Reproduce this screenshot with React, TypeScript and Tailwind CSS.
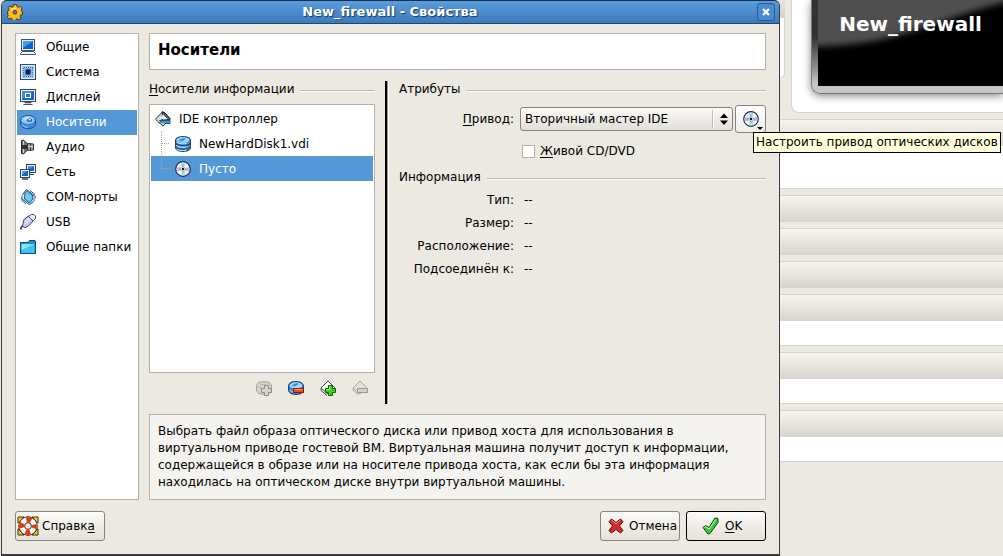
import React, { useState } from "react";

type IconProps = {
  children: React.ReactNode;
  size?: number;
};

const Icon: React.FC<IconProps> = ({ children, size = 16 }) => (
  <svg
    width={size}
    height={size}
    viewBox="0 0 16 16"
    fill="none"
    className="shrink-0"
    aria-hidden="true"
  >
    {children}
  </svg>
);

const GeneralIcon = () => (
  <Icon>
    <rect x="1.5" y="0.5" width="13" height="11" fill="#e9eef4" stroke="#4a5260" />
    <rect x="3" y="2" width="10" height="8" fill="#0a62d0" />
    <path d="M3 2h10L3 9z" fill="#3d9bf2" />
    <path d="M2.5 12.5h11l2 2v1H.5v-1z" fill="#f2f4f6" stroke="#4a505c" />
  </Icon>
);

const SystemIcon = () => (
  <Icon>
    <rect x="0.5" y="0.5" width="15" height="15" fill="#9fcbf7" stroke="#3c4a60" />
    <rect x="1.5" y="1.5" width="13" height="13" stroke="#dcebfc" />
    <path
      d="M4 3.500h9M4 12.500h9M3.500 4v9M12.500 4v9"
      stroke="#2f6fc0"
      strokeDasharray="1 1"
    />
    <rect x="4.500" y="4.500" width="7" height="7" fill="#5f9be0" />
    <rect x="5.500" y="5.500" width="5" height="5" fill="#0f1c3c" />
    <path d="M5 6l1 0M10 5h1M5 10h1M10 10h1" stroke="#8fc0f2" />
  </Icon>
);

const DisplayIcon = () => (
  <Icon>
    <rect x="0.5" y="0.5" width="15" height="12" fill="#eef2f6" stroke="#3f4756" />
    <rect x="2" y="2" width="12" height="9" fill="#1566d0" />
    <path d="M2 2h12L2 10z" fill="#3a8fe8" />
    <rect x="5.5" y="4.5" width="5" height="4" fill="#2473d6" stroke="#fff" />
    <path d="M5 13h6v2H5z" fill="#c9ced6" />
    <path d="M3.5 15.500h9M4.500 13.500h7" stroke="#4a505c" />
  </Icon>
);

const StorageIcon = () => (
  <Icon>
    <path
      d="M.6 6.5C.6 3.500 4 1.600 8.200 1.600s7.300 2 7.300 4.600v4c0 2.800-3.300 4.400-7.300 4.400S.6 12.600.6 9.800z"
      fill="#3c8bd8"
      stroke="#1d4f88"
    />
    <ellipse cx="8" cy="6" rx="6.600" ry="3.900" fill="#8fccf8" />
    <path d="M2.500 5l5-2.500 3 .5-5 3z" fill="#c4e5fc" />
    <ellipse cx="9.500" cy="6.200" rx="2.800" ry="1.700" fill="#1f5fa6" />
    <ellipse cx="9.500" cy="5.700" rx="1.500" ry="0.800" fill="#e6f5fe" />
    <path d="M2 10.500c1 2 3 2.700 6 2.700" stroke="#a4d5f7" />
  </Icon>
);

const AudioIcon = () => (
  <Icon>
    <path d="M1.500 1.500L3.500 1l4 4v6l-4 4-2-.5z" fill="#777" stroke="#222" />
    <path d="M3.500 2v12" stroke="#ccc" />
    <rect x="1" y="6" width="6" height="4" fill="#333" />
    <path d="M7.500 4.500l6 .5v6l-6 .5z" fill="#a5a5a5" stroke="#333" />
    <path d="M10.500 4v8" stroke="#444" />
    <path d="M8 7.500h5" stroke="#ddd" />
  </Icon>
);

const NetworkIcon = () => (
  <Icon>
    <rect x="6.500" y="0.500" width="9" height="8" fill="#eef2f6" stroke="#33415a" />
    <rect x="8" y="2" width="6" height="5" fill="#0f63d2" />
    <path d="M8 2h6L8 6z" fill="#3e97f0" />
    <path d="M10 10.500h4" stroke="#33415a" />
    <rect x="0.500" y="5.500" width="9" height="8" fill="#eef2f6" stroke="#33415a" />
    <rect x="2" y="7" width="6" height="5" fill="#0f63d2" />
    <path d="M2 7h5l-5 4z" fill="#4a9cf0" />
    <path d="M2 15h6" stroke="#33415a" strokeWidth="1.500" />
  </Icon>
);

const SerialIcon = () => (
  <Icon>
    <path d="M6.500.600l9 7-2 5-4 3-8-6 1-4z" fill="#c9eafa" stroke="#2c4c6a" />
    <path d="M5 3.500l2-2 5.500 4.500.5 4-3.500 4-5-4z" fill="#5bbcec" stroke="#245d87" />
    <path d="M6 5l5 4M5 7l5 4M1 8l3-3M12 13l3-4" stroke="#b4e3f8" />
    <path d="M1 10.500l5 4.500M10 1.500l5 4" stroke="#35556f" />
  </Icon>
);

const UsbIcon = () => (
  <Icon>
    <path d="M.700 15.500c0-2.500 1-3.500 3.300-4.500" stroke="#3e4568" strokeWidth="1.800" />
    <path
      d="M2.500 11.500l1.500-6L8.500 2l5 4.500-5 5.500-4 2z"
      fill="#c3c8ec"
      stroke="#3e4568"
    />
    <path d="M8.500 2.500l3-2h2.500l1.500 1.500v2.500l-2.500 2.500z" fill="#f0f2fb" stroke="#3e4568" />
    <path d="M5.500 7l3.500-3M5 10l5.500-5" stroke="#fff" />
  </Icon>
);

const FolderIcon = () => (
  <Icon>
    <path d="M.500 3.500h8l1-2h5.500l.5 1.500v11.500H.500z" fill="#1c8fd0" stroke="#12496f" />
    <path d="M1.500 5h13v9h-13z" fill="#3cc4f2" />
    <path d="M1.500 5h13l-13 6z" fill="#8be3fa" />
    <path d="M2 14.500h13.500V5" stroke="#12496f" />
  </Icon>
);

const ControllerIcon = () => (
  <Icon>
    <path d="M7.500.700l4 3-7 8.500-4-4z" fill="#d7dadd" stroke="#333" />
    <path d="M7.500.700L10 2l5.500 6-1.500 1H7z" fill="#555c63" stroke="#222" />
    <path d="M8 3.500l4.500 4.500-4 .500L5.500 7z" fill="#fff" />
    <path d="M4.500 9.500h10.500v3h-7z" fill="#27a0e5" stroke="#155781" />
    <path d="M4 11.500l4 3.500 2.500-2.500" stroke="#333" fill="#cfd3d6" />
  </Icon>
);

const HardDiskIcon = () => (
  <Icon>
    <path
      d="M.600 4C.600 1.800 4 .600 8 .600S15.400 1.800 15.400 4v8c0 2.200-3.400 3.400-7.400 3.400S.600 14.200.600 12z"
      fill="#4090da"
      stroke="#14325a"
    />
    <ellipse cx="8" cy="4" rx="6.500" ry="2.900" fill="#9dd4fa" />
    <path d="M3 4.500l5-2.500 3 .500-4 3z" fill="#3a8ad8" />
    <path d="M1 7.500c1.500 2.500 12.500 2.500 14 0M1 11.300c1.500 2.500 12.500 2.500 14 0" stroke="#14325a" />
    <path
      d="M1.500 6c2 2 8 2.200 10 1.500M1.500 9.500c2 2 8 2.200 10 1.500M1.500 13c2 1.500 7 2 10 1"
      stroke="#d4ecfd"
    />
  </Icon>
);

const DiscIcon = () => (
  <Icon>
    <circle cx="8" cy="8" r="7.300" fill="#fff" stroke="#1f2d48" strokeWidth="1.200" />
    <path d="M6 2.200h4.500L9 6H7z" fill="#7fd0f6" />
    <path d="M6 13.800h4.500L9 10H7z" fill="#86e6d2" />
    <path d="M2.200 6l4 1v2l-4 1.500z" fill="#b7a4ee" />
    <path d="M13.800 6l-4 1v2l4 1.500z" fill="#9fb4f4" />
    <path d="M3.500 4.500L5 3l2 3-1 1zM12.500 11.500L11 13l-2-3 1-1z" fill="#f7d9e6" />
    <circle cx="8" cy="8" r="2.300" fill="#fff" stroke="#8592a8" strokeWidth="0.700" />
    <circle cx="8" cy="8" r="1.200" fill="#111" />
  </Icon>
);

const AddDiskIcon = () => (
  <Icon>
    <path
      d="M.600 5.500C1 2.500 4 1.600 8 1.600s7 1.400 7.400 3.900v5c-.4 2.500-3.400 3.900-7.400 3.900S1 13 .600 10.500z"
      fill="#d4d2cd"
      stroke="#a09e99"
    />
    <path d="M2 6.500c2 2.500 6 2 8 1.500M4 4l6 1" stroke="#b5b3ae" />
    <path
      d="M8.500 5.500h4v3h3v4h-3v3h-4v-3h-3v-4h3z"
      fill="#d6d4cf"
      stroke="#8e8c88"
    />
  </Icon>
);

const RemoveDiskIcon = () => (
  <Icon>
    <path
      d="M.600 5.500C1 2.500 4 1.600 8 1.600s7 1.400 7.400 3.900v5c-.4 2.500-3.400 3.900-7.400 3.900S1 13 .600 10.500z"
      fill="#3a8ad8"
      stroke="#14325a"
    />
    <ellipse cx="8" cy="5.500" rx="6.300" ry="3.200" fill="#a5d8fa" />
    <path d="M3.500 5.500l5-2.500 2 1-4 2.500z" fill="#3a86d2" />
    <path d="M2 10c1 1.500 2 2 4 2.500" stroke="#c8e7fb" />
    <rect x="5.500" y="8.500" width="10" height="4" fill="#ee4a1c" stroke="#8e1c05" />
    <path d="M6.500 9.500h8" stroke="#ff9c70" />
  </Icon>
);

const AddControllerIcon = () => (
  <Icon>
    <path d="M8 1l6.500 6.500L8 14 1 8z" fill="#fff" stroke="#444" />
    <path d="M1 8.500v2l6 5" stroke="#444" />
    <path
      d="M8.500 5.500h4v3h3v4h-3v3h-4v-3h-3v-4h3z"
      fill="#3ccf1c"
      stroke="#116004"
    />
    <path d="M9.500 6.500v3h-3" stroke="#b2f59c" />
  </Icon>
);

const RemoveControllerIcon = () => (
  <Icon>
    <path d="M8 1l6.500 6.500L8 14 1 8z" fill="#e4e1dc" stroke="#aaa7a2" />
    <path d="M1 8.500v2l6 4.500" stroke="#aaa7a2" />
    <rect x="5.500" y="8.500" width="10" height="4" fill="#d3d1cc" stroke="#9b9994" />
  </Icon>
);

const GearIcon = () => (
  <Icon>
    <g fill="#f8b92c" stroke="#5c3505">
      <path d="M6.500.600h3l.500 2 1.500.700 2-1 1.600 1.700-.900 2 .700 1.500h.600v3l-2 .500-.500 1.200 1 2-1.900 1.700-1.900-1.100-1.200.500-.500 1.200h-3l-.500-1.800-1.300-.500-1.900 1-1.500-1.800 1-1.900-.600-1.200-.200-3 1.200-.600.500-1.200-1-2L3 2.200l2 1 1.200-.600z" />
      <circle cx="8" cy="8.300" r="1.800" fill="#4e80b5" />
    </g>
    <path d="M4 6.500c1-2 3-2.600 5-2.300" stroke="#ffe690" strokeWidth="1.400" />
  </Icon>
);

const LifebuoyIcon = () => (
  <svg width="22" height="20" viewBox="0 0 22 20" className="shrink-0" aria-hidden="true">
    <path
      d="M1 1h6L2 7H1zM21 1h-6l5 6h1zM1 19h6l-5-6H1zM21 19h-6l5-6h1z"
      fill="#f2d43a"
      stroke="#3a2c08"
    />
    <circle cx="11" cy="10" r="6.200" fill="none" stroke="#2b1610" strokeWidth="7" />
    <circle cx="11" cy="10" r="6.200" fill="none" stroke="#fbfaf7" strokeWidth="5.400" />
    <circle
      cx="11"
      cy="10"
      r="6.200"
      fill="none"
      stroke="#d83c16"
      strokeWidth="5.400"
      strokeDasharray="4.870 4.870"
      strokeDashoffset="2.430"
    />
    <circle cx="11" cy="10" r="3.300" fill="#f3f1ed" stroke="#4a2c20" strokeWidth="0.800" />
  </svg>
);

const CancelIcon = () => (
  <Icon>
    <path
      d="M3.500 1l4.500 3.500L12.500 1 15 3.500 11.500 8l3.500 4.500-2.500 2.500L8 11.500 3.500 15 1 12.500 4.500 8 1 3.500z"
      fill="#d22c2c"
      stroke="#5e1010"
      strokeLinejoin="round"
    />
    <path d="M3 3.500l1-1L8 5.800l4-3.300" stroke="#ef8585" />
  </Icon>
);

const OkIcon = () => (
  <svg width="18" height="18" viewBox="0 0 18 18" className="shrink-0" aria-hidden="true">
    <path
      d="M1 10.500l2.500-2L7 10.500 13 1l3 .500v4L8 16.500l-2 .500z"
      fill="#3fc93a"
      stroke="#123f12"
      strokeLinejoin="round"
    />
    <path d="M2.500 10.500l1.200-.800 3.500 2.300 6.300-9.500" fill="none" stroke="#bdf5b4" />
  </svg>
);

const sections = [
  { name: "Общие", icon: <GeneralIcon /> },
  { name: "Система", icon: <SystemIcon /> },
  { name: "Дисплей", icon: <DisplayIcon /> },
  { name: "Носители", icon: <StorageIcon /> },
  { name: "Аудио", icon: <AudioIcon /> },
  { name: "Сеть", icon: <NetworkIcon /> },
  { name: "COM-порты", icon: <SerialIcon /> },
  { name: "USB", icon: <UsbIcon /> },
  { name: "Общие папки", icon: <FolderIcon /> },
];

const details = [
  { label: "Тип:", value: "--" },
  { label: "Размер:", value: "--" },
  { label: "Расположение:", value: "--" },
  { label: "Подсоединён к:", value: "--" },
];

const TitleBar = () => (
  <header className="flex h-6 items-center rounded-t-[5px] border-t border-b border-t-[#17304f] border-b-[#23466f] bg-linear-to-b from-[#5a9cdc] to-[#3c7bbd] pr-1 pl-[5px]">
    <GearIcon />
    <h1 className="flex-1 text-center text-[13px] font-bold text-white [text-shadow:1px_1px_1px_#1b3a5e]">
      New_firewall - Свойства
    </h1>
    <button
      type="button"
      aria-label="Закрыть"
      className="flex h-[18px] w-[18px] items-center justify-center rounded-[3px] border border-[#2a5a92] bg-[#4a8bcf]"
    >
      <svg width="8" height="8" viewBox="0 0 8 8" aria-hidden="true">
        <path d="M1 1l6 6M7 1L1 7" stroke="#fff" strokeWidth="2.200" />
      </svg>
    </button>
  </header>
);

type GroupTitleProps = {
  children: React.ReactNode;
};

const GroupTitle: React.FC<GroupTitleProps> = ({ children }) => (
  <div className="flex h-4 items-center gap-[6px]">
    <h3>{children}</h3>
    <div className="mt-1 h-[2px] flex-1 border-b border-white bg-[#b8b4ac]" />
  </div>
);

type BranchProps = {
  last?: boolean;
};

const Branch: React.FC<BranchProps> = ({ last }) => (
  <svg width="24" height="25" viewBox="0 0 24 25" className="shrink-0" aria-hidden="true">
    <path
      d={last ? "M10.500 0v12.500h9" : "M10.500 0v25M11 12.500h8"}
      fill="none"
      stroke="#a9a59d"
      strokeDasharray="1 1"
    />
  </svg>
);

const MediaTree = () => (
  <section className="flex w-[226px] flex-col">
    <GroupTitle>
      <u className="underline-offset-2">Н</u>осители информации
    </GroupTitle>
    <ul className="mt-[7px] flex-1 border border-[#b5b1a8] bg-white p-px">
      <li>
        <div className="flex h-[25px] items-center gap-2 pl-1">
          <ControllerIcon />
          IDE контроллер
        </div>
        <ul>
          <li className="flex h-[25px] items-center">
            <Branch />
            <HardDiskIcon />
            <span className="pl-2">NewHardDisk1.vdi</span>
          </li>
          <li className="flex h-[25px] items-center bg-[#5598d7] text-white">
            <Branch last />
            <DiscIcon />
            <span className="pl-2">Пусто</span>
          </li>
        </ul>
      </li>
    </ul>
    <div className="flex justify-end gap-4 pt-[7px] pr-[7px] pb-2">
      <button type="button" aria-label="Добавить устройство" disabled>
        <AddDiskIcon />
      </button>
      <button type="button" aria-label="Удалить устройство">
        <RemoveDiskIcon />
      </button>
      <button type="button" aria-label="Добавить контроллер">
        <AddControllerIcon />
      </button>
      <button type="button" aria-label="Удалить контроллер" disabled>
        <RemoveControllerIcon />
      </button>
    </div>
  </section>
);

const Attributes = () => {
  const [liveCd, setLiveCd] = useState<boolean>(false);

  return (
    <section className="min-w-0 flex-1">
      <GroupTitle>Атрибуты</GroupTitle>
      <div className="mt-2 flex h-7 items-center">
        <label htmlFor="drive" className="w-[115px] text-right">
          <u className="underline-offset-2">П</u>ривод:
        </label>
        <div className="relative ml-[6px] flex-1">
          <select
            id="drive"
            className="h-6 w-full appearance-none rounded-[3px] border border-[#8a857c] bg-linear-to-b from-[#fbfaf8] to-[#e2ded7] pl-1"
          >
            <option>Вторичный мастер IDE</option>
          </select>
          <svg
            width="20"
            height="18"
            viewBox="0 0 20 18"
            className="pointer-events-none absolute top-[3px] right-px"
            aria-hidden="true"
          >
            <path d="M.500 0v18" stroke="#c0bcb4" />
            <path d="M1.500 0v18" stroke="#fff" />
            <path d="M8 8l4-4.500L16 8zM8 10.500h8L12 15z" fill="#000" />
          </svg>
        </div>
        <div className="relative ml-[2px]">
          <button
            type="button"
            aria-label="Настроить привод"
            aria-describedby="drive-tip"
            className="relative flex h-7 w-[31px] items-center justify-center rounded-[3px] border border-[#8a857c] bg-linear-to-b from-[#fefefd] to-[#f1eeea]"
          >
            <DiscIcon />
            <svg
              width="6"
              height="3"
              viewBox="0 0 6 3"
              className="absolute right-[2px] bottom-[2px]"
              aria-hidden="true"
            >
              <path d="M0 0h6L3 3z" fill="#000" />
            </svg>
          </button>
          <div
            id="drive-tip"
            role="tooltip"
            className="absolute top-[27px] left-[18px] z-10 border border-black bg-[#ffffdc] px-[2px] leading-[19px] whitespace-nowrap"
          >
            Настроить привод оптических дисков
          </div>
        </div>
      </div>
      <label className="mt-[10px] ml-[123px] flex h-4 items-center gap-[5px]">
        <input
          type="checkbox"
          checked={liveCd}
          onChange={(e) => setLiveCd(e.target.checked)}
          className="h-[13px] w-[13px] appearance-none border border-[#b5b1a8] bg-white checked:bg-[#5598d7]"
        />
        <span>
          <u className="underline-offset-2">Ж</u>ивой CD/DVD
        </span>
      </label>
      <div className="mt-[10px]">
        <GroupTitle>Информация</GroupTitle>
      </div>
      <dl className="mt-[3px]">
        {details.map((item) => (
          <div key={item.label} className="flex h-[23px] items-center gap-[10px]">
            <dt className="w-[115px] text-right">{item.label}</dt>
            <dd>{item.value}</dd>
          </div>
        ))}
      </dl>
    </section>
  );
};

const SettingsDialog = () => {
  const [current, setCurrent] = useState<string>("Носители");

  return (
    <main className="relative z-10 ml-px flex min-w-0 flex-1 flex-col self-start rounded-t-[6px] border-x border-b-2 border-[#3d3a3a] bg-[#ece9e3]">
      <TitleBar />
      <div className="px-[13px] pt-[9px] pb-[13px]">
        <div className="flex gap-[10px]">
          <nav className="w-[124px] border border-[#b5b1a8] bg-white p-px">
            {sections.map((item) => (
              <button
                key={item.name}
                type="button"
                onClick={() => setCurrent(item.name)}
                className={
                  item.name === current
                    ? "flex h-[25px] w-full items-center gap-[10px] bg-[#5598d7] pb-[2px] pl-[3px] whitespace-nowrap text-white"
                    : "flex h-[25px] w-full items-center gap-[10px] pb-[2px] pl-[3px] whitespace-nowrap"
                }
              >
                {item.icon}
                {item.name}
              </button>
            ))}
          </nav>
          <div className="min-w-0 flex-1">
            <h2 className="flex h-[37px] items-center border border-[#b5b1a8] bg-white px-2 pb-[2px] text-[15px] font-bold">
              {current}
            </h2>
            <div className="mt-[11px] flex min-h-[323px] gap-[10px]">
              <MediaTree />
              <div className="w-1 border-r border-l-2 border-r-white border-l-black bg-[#9a968f]" />
              <Attributes />
            </div>
            <p className="mt-[10px] border border-[#b5b1a8] bg-[#f4f3f0] px-2 py-2 leading-[17px]">
              Выбрать файл образа оптического диска или привод хоста для использования в
              <br />
              виртуальном приводе гостевой ВМ. Виртуальная машина получит доступ к информации,
              <br />
              содержащейся в образе или на носителе привода хоста, как если бы эта информация
              <br />
              находилась на оптическом диске внутри виртуальной машины.
            </p>
          </div>
        </div>
        <footer className="mt-[11px] flex gap-[6px]">
          <button
            type="button"
            className="mr-auto flex h-[30px] w-[90px] items-center gap-[3px] rounded-[3px] border border-[#8a857c] bg-linear-to-b from-[#fcfbf9] to-[#e4e0d9] pl-px"
          >
            <LifebuoyIcon />
            <span>
              Справк<u className="underline-offset-2">а</u>
            </span>
          </button>
          <button
            type="button"
            className="flex h-[30px] w-20 items-center gap-[5px] rounded-[3px] border border-[#8a857c] bg-linear-to-b from-[#fcfbf9] to-[#e4e0d9] pl-[7px]"
          >
            <CancelIcon />
            Отмена
          </button>
          <button
            type="button"
            className="flex h-[30px] w-20 items-center gap-[5px] rounded-[3px] border border-black bg-linear-to-b from-[#fcfbf9] to-[#e4e0d9] pl-[15px]"
          >
            <OkIcon />
            <span>
              <u className="underline-offset-2">O</u>K
            </span>
          </button>
        </footer>
      </div>
    </main>
  );
};

type PanelProps = {
  body?: string;
};

const Panel: React.FC<PanelProps> = ({ body }) => (
  <div className="border-t border-[#d5d3ce]">
    <div className="h-[26px] bg-linear-to-b from-[#f8f5ee] to-[#d7d4cf]" />
    {body && <div className={`border-b border-[#d5d3ce] bg-white ${body}`} />}
  </div>
);

// Part of the manager window that stays visible behind the dialog
const ManagerWindow = () => (
  <aside className="w-[223px] shrink-0 overflow-hidden">
    <div className="flex h-[113px] gap-[6px]">
      <div className="flex h-[78px] w-[5px] flex-col">
        <div className="h-[18px] bg-linear-to-b from-[#e6e3de] to-[#d7d4cf]" />
        <div className="flex-1 rounded-br-[5px] border-r border-b border-[#d5d3ce] bg-white" />
      </div>
      <div className="flex-1 rounded-bl-[8px] border-b border-l border-[#d5d3ce] bg-white pl-[19px]">
        <div className="h-[94px] rounded-bl-[9px] border-b border-l border-[#777] bg-linear-to-b from-[#333] from-40% to-[#c6c6c6] to-90% pb-[7px] pl-[6px] shadow-[0_2px_8px_#888]">
          <div className="relative flex h-full justify-center overflow-hidden bg-black pt-[10px]">
            <svg
              width="100%"
              height="100%"
              viewBox="0 0 185 86"
              preserveAspectRatio="none"
              className="absolute inset-0"
              aria-hidden="true"
            >
              <defs>
                <filter id="soft" x="-10%" y="-10%" width="120%" height="120%">
                  <feGaussianBlur stdDeviation="3" />
                </filter>
              </defs>
              <path
                d="M-20-20h230V-2C170 3 125 22 88 33 60 42 30 46-20 47z"
                fill="#505050"
                filter="url(#soft)"
              />
            </svg>
            <span className="relative text-xl leading-7 font-bold text-white">New_firewall</span>
          </div>
        </div>
      </div>
    </div>
    <div className="mt-[6px] flex flex-col gap-[6px]">
      <Panel body="h-[43px]" />
      <Panel />
      <Panel />
      <Panel />
      <Panel body="h-[25px]" />
      <Panel body="h-[25px]" />
      <Panel body="h-[25px]" />
    </div>
  </aside>
);

const App: React.FC = () => {
  return (
    <div className="flex min-h-screen bg-[#ece9e3] font-['DejaVu_Sans',sans-serif] text-xs text-black">
      <SettingsDialog />
      <ManagerWindow />
    </div>
  );
};

export default App;
